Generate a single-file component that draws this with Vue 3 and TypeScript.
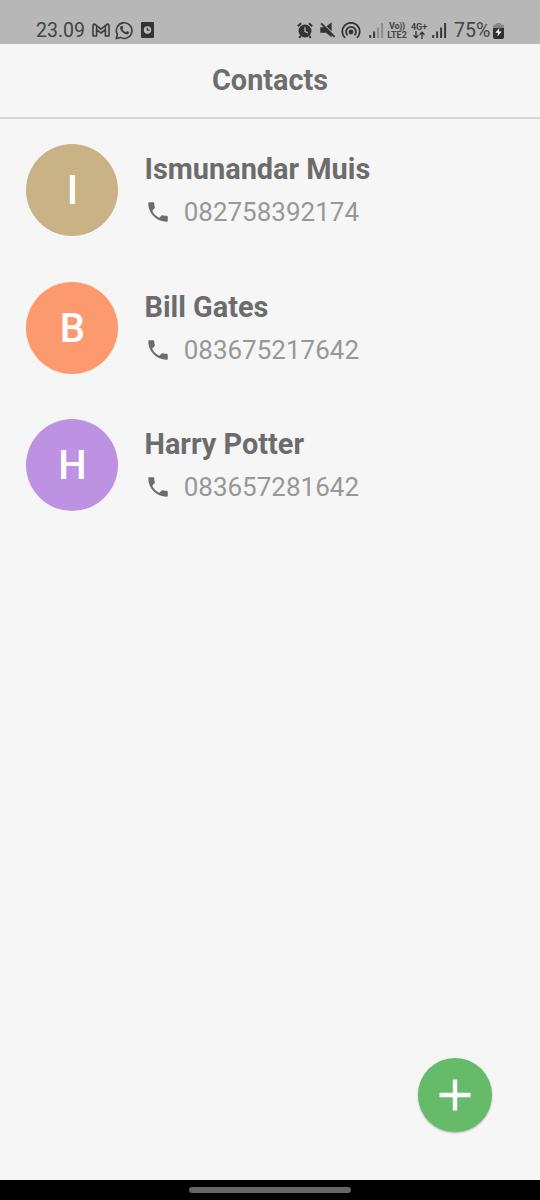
<script setup lang="ts">
interface Contact {
  name: string
  phone: string
  color: string
}

const contacts: Contact[] = [
  { name: 'Ismunandar Muis', phone: '082758392174', color: '#c9b286' },
  { name: 'Bill Gates', phone: '083675217642', color: '#fc996f' },
  { name: 'Harry Potter', phone: '083657281642', color: '#be92e2' },
]
</script>

<template>
  <div class="screen">
    <div class="status">
      <span class="time">23.09</span>
      <svg class="gmail" width="18" height="14" viewBox="0 0 18 14">
        <path d="M1 2.4Q1 1 2.4 1L9 6.1 15.6 1Q17 1 17 2.4V13H13.4V6.6L9 10 4.6 6.6V13H1Z" fill="none" stroke="#3d3d3d" stroke-width="1.6" stroke-linejoin="round" />
        <path d="M4.6 3V7M13.4 3V7" stroke="#3d3d3d" stroke-width="1.3" />
      </svg>
      <svg class="whatsapp" width="19" height="19" viewBox="0 0 19 19">
        <path d="M1.2 17.6 2.4 13.4A7.8 7.8 0 1 1 5.4 16.4Z" fill="none" stroke="#3d3d3d" stroke-width="1.6" stroke-linejoin="round" />
        <path d="M6.1 5Q7.3 4.3 7.7 5.3L8.3 6.9 7.4 8.2Q8.6 10.4 10.9 11.3L12 10.1 14 11.1Q14.3 12.2 13.2 13 11.4 14.2 8.4 12 5.7 10 5.1 7.7 4.9 5.8 6.1 5Z" fill="#3d3d3d" />
      </svg>
      <svg class="app-clock" width="13" height="16" viewBox="0 0 13 16">
        <rect width="13" height="16" rx="1.2" fill="#333" />
        <circle cx="6.5" cy="8" r="3.7" fill="#bbb" />
        <path d="M6.4 5.7V8.2H8.6" fill="none" stroke="#333" stroke-width="1.2" />
      </svg>

      <svg class="alarm" width="16" height="17" viewBox="0 0 16 17">
        <circle cx="8" cy="9" r="6.5" fill="#333" />
        <path d="M.8 4.3 4.1 1.3M11.9 1.3 15.2 4.3M3.7 14 2.2 15.8M12.3 14 13.8 15.8" stroke="#333" stroke-width="2" />
        <path d="M8 5.3V9.4L11 11" fill="none" stroke="#b7b7b7" stroke-width="1.3" />
      </svg>
      <svg class="mute" width="16" height="16" viewBox="0 0 16 16">
        <path d="M.3 5.2H5L11.6 11.6V15.3L6 10.8H.3ZM6.6 4.2 11.6.3V9.2Z" fill="#333" />
        <path d="M1.2 1.3 14.6 14.8" stroke="#333" stroke-width="1.9" />
      </svg>
      <svg class="hotspot" width="20" height="17" viewBox="0 0 20 17">
        <circle cx="10" cy="10" r="2.4" fill="#333" />
        <path d="M4 15.8A8.7 8.7 0 1 1 16 15.8M6.6 13.4A4.9 4.9 0 1 1 13.4 13.4" fill="none" stroke="#333" stroke-width="1.8" />
      </svg>
      <svg class="signal-one" width="15" height="15" viewBox="0 0 15 15">
        <path d="M1.2 12V15M5.1 8.5V15" stroke="#3a3a3a" stroke-width="2" />
        <path d="M9.1 4.5V15M13.1 0V15" stroke="#8d8d8d" stroke-width="2" />
      </svg>
      <span class="volte"><span class="vo">Vo))</span><span>LTE2</span></span>
      <span class="data">
        <span>4G+</span>
        <svg width="12" height="8" viewBox="0 0 12 8">
          <path d="M3 0V6.6M.6 4.3 3 6.8 5.4 4.3M9 8V1.4M6.6 3.7 9 1.2 11.4 3.7" fill="none" stroke="#333" stroke-width="1.3" />
        </svg>
      </span>
      <svg class="signal-two" width="15" height="15" viewBox="0 0 15 15">
        <path d="M1.2 12V15M5.1 8.5V15M9.1 4.5V15M13.1 0V15" stroke="#3a3a3a" stroke-width="2" />
      </svg>
      <span class="percent">75%</span>
      <svg class="battery" width="11" height="16" viewBox="0 0 11 16">
        <path d="M3.3 0H7.7V1.6H9Q11 1.6 11 3.5V5H0V3.5Q0 1.6 2 1.6H3.3Z" fill="#858585" />
        <path d="M0 5H11V14Q11 16 9 16H2Q0 16 0 14Z" fill="#303030" />
        <path d="M6.4 5 2.3 9.8H5L4.4 13.4 8.7 8.6H6Z" fill="#f4f4f4" />
      </svg>
    </div>

    <header class="header">Contacts</header>

    <main class="list">
      <div v-for="c in contacts" :key="c.phone" class="row">
        <div class="avatar" :style="{ backgroundColor: c.color }">{{ c.name.charAt(0) }}</div>
        <div class="info">
          <div class="name">{{ c.name }}</div>
          <div class="phone">
            <svg width="26" height="26" viewBox="0 0 24 24">
              <path d="M6.62 10.79c1.44 2.83 3.76 5.14 6.59 6.59l2.2-2.2c.27-.27.67-.36 1.02-.24 1.12.37 2.33.57 3.57.57.55 0 1 .45 1 1V20c0 .55-.45 1-1 1-9.39 0-17-7.61-17-17 0-.55.45-1 1-1h3.5c.55 0 1 .45 1 1 0 1.25.2 2.45.57 3.57.11.35.03.74-.25 1.02l-2.2 2.2z" fill="#6c6c6c" />
            </svg>
            <span>{{ c.phone }}</span>
          </div>
        </div>
      </div>
    </main>

    <button class="fab" aria-label="Add contact">
      <svg width="32" height="32" viewBox="0 0 32 32">
        <path d="M16 .5V31.5M.5 16H31.5" stroke="#fff" stroke-width="4.4" />
      </svg>
    </button>

    <div class="navbar"><div class="handle"></div></div>
  </div>
</template>

<style>
body {
  margin: 0;
}
</style>

<style scoped>
.screen {
  position: relative;
  display: flex;
  flex-direction: column;
  width: 540px;
  height: 1200px;
  overflow: hidden;
  background: #f6f6f6;
  font-family: Roboto, sans-serif;
}
.status {
  display: flex;
  align-items: flex-start;
  box-sizing: border-box;
  height: 44px;
  padding: 20px 0 0 36px;
  background: #b7b7b7;
  color: #444;
}
.status > * {
  flex: none;
}
.time {
  width: 49px;
  margin-top: 1px;
  font-size: 19.5px;
  line-height: 20px;
}
.gmail {
  margin: 3px 0 0 7px;
}
.whatsapp {
  margin: 1px 0 0 5px;
}
.app-clock {
  margin: 2px 0 0 7px;
}
.alarm {
  margin: 2px 0 0 143px;
}
.mute {
  margin: 2px 0 0 7px;
}
.hotspot {
  margin: 2px 0 0 5px;
}
.signal-one {
  margin: 3px 0 0 8px;
}
.volte {
  display: flex;
  flex-direction: column;
  align-items: center;
  width: 22px;
  margin: 2px 0 0 2px;
  font-size: 9px;
  font-weight: 700;
  line-height: 9px;
}
.vo {
  letter-spacing: -0.3px;
}
.data {
  display: flex;
  flex-direction: column;
  align-items: center;
  width: 18px;
  margin: 3px 0 0 2px;
  font-size: 9px;
  font-weight: 700;
  line-height: 8px;
}
.signal-two {
  margin: 3px 0 0 4px;
}
.percent {
  width: 38px;
  margin: 1px 0 0 7px;
  font-size: 19.6px;
  line-height: 20px;
}
.battery {
  margin: 3px 0 0 1px;
}
.header {
  box-sizing: border-box;
  height: 75px;
  border-bottom: 2px solid #d8d8d8;
  color: #6e6e6e;
  font-size: 28.8px;
  font-weight: 700;
  line-height: 73px;
  text-align: center;
}
.list {
  flex: 1;
  display: flex;
  flex-direction: column;
  gap: 45.7px;
  padding: 24.9px 26.4px;
}
.row {
  display: flex;
  gap: 26.1px;
}
.avatar {
  width: 92px;
  height: 92px;
  border-radius: 50%;
  color: #fff;
  font-size: 40px;
  font-weight: 500;
  line-height: 93px;
  text-align: center;
}
.name {
  margin-top: 8px;
  color: #6c6c6c;
  font-size: 28.9px;
  font-weight: 700;
  line-height: 34px;
}
.phone {
  display: flex;
  align-items: center;
  gap: 12.6px;
  height: 32px;
  margin-top: 10.2px;
  padding-left: 0.6px;
  color: #989898;
  font-size: 26px;
  line-height: 32px;
}
.fab {
  position: absolute;
  left: 417.6px;
  top: 1058px;
  display: flex;
  align-items: center;
  justify-content: center;
  width: 74px;
  height: 74px;
  padding: 0;
  border: 0;
  border-radius: 50%;
  background: #66bb6a;
  box-shadow: 0 1px 2px rgba(0, 0, 0, 0.3);
}
.navbar {
  display: flex;
  justify-content: center;
  box-sizing: border-box;
  height: 20px;
  padding-top: 7px;
  background: #000;
}
.handle {
  width: 162px;
  height: 6px;
  border-radius: 3px;
  background: #666;
}
</style>
